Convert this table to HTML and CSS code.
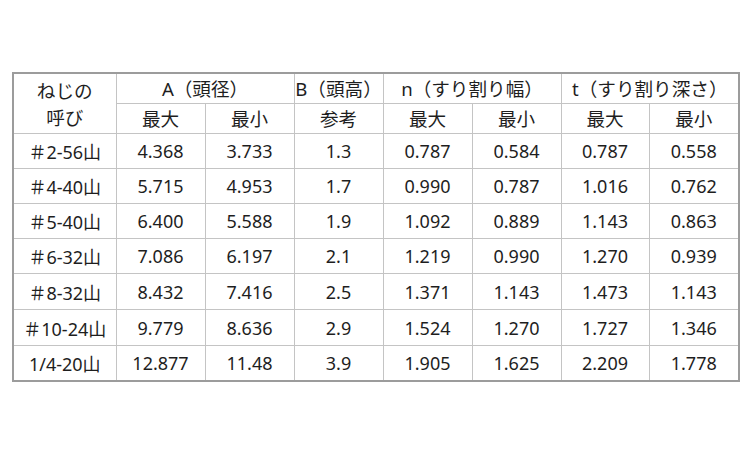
FILE: index.html
```html
<!DOCTYPE html>
<html lang="ja">
<head>
<meta charset="utf-8">
<link rel="stylesheet" href="styles.css">
</head>
<body>
<div class="wrap">
<table class="spec">
<colgroup>
<col class="c-name"><col class="c-v"><col class="c-v"><col class="c-v"><col class="c-v"><col class="c-v"><col class="c-v2"><col class="c-v3">
</colgroup>
<thead>
<tr class="h1">
<th rowspan="2" class="name">ねじの<br>呼び</th>
<th colspan="2">A（頭径）</th>
<th>B（頭高）</th>
<th colspan="2">n（すり割り幅）</th>
<th colspan="2">t（すり割り深さ）</th>
</tr>
<tr class="h2">
<th>最大</th><th>最小</th><th>参考</th><th>最大</th><th>最小</th><th>最大</th><th>最小</th>
</tr>
</thead>
<tbody>
<tr class="r35"><td>＃2-56山</td><td>4.368</td><td>3.733</td><td>1.3</td><td>0.787</td><td>0.584</td><td>0.787</td><td>0.558</td></tr>
<tr class="r35"><td>＃4-40山</td><td>5.715</td><td>4.953</td><td>1.7</td><td>0.990</td><td>0.787</td><td>1.016</td><td>0.762</td></tr>
<tr class="r35"><td>＃5-40山</td><td>6.400</td><td>5.588</td><td>1.9</td><td>1.092</td><td>0.889</td><td>1.143</td><td>0.863</td></tr>
<tr class="r35"><td>＃6-32山</td><td>7.086</td><td>6.197</td><td>2.1</td><td>1.219</td><td>0.990</td><td>1.270</td><td>0.939</td></tr>
<tr class="r36"><td>＃8-32山</td><td>8.432</td><td>7.416</td><td>2.5</td><td>1.371</td><td>1.143</td><td>1.473</td><td>1.143</td></tr>
<tr class="r36"><td>＃10-24山</td><td>9.779</td><td>8.636</td><td>2.9</td><td>1.524</td><td>1.270</td><td>1.727</td><td>1.346</td></tr>
<tr class="r35"><td>1/4-20山</td><td>12.877</td><td>11.48</td><td>3.9</td><td>1.905</td><td>1.625</td><td>2.209</td><td>1.778</td></tr>
</tbody>
</table>
</div>
</body>
</html>
```

FILE: styles.css
```css
html, body {
  margin: 0;
  padding: 0;
  background: #ffffff;
}
.wrap {
  padding: 72px 0 0 12px;
}
.spec {
  border-collapse: collapse;
  table-layout: fixed;
  width: 727px;
  border: 2px solid #9c9c9c;
  font-family: "Noto Sans", "Noto Sans CJK JP", sans-serif;
  font-size: 18px;
  color: #1e1e1e;
}
.c-name { width: 103px; }
.c-v { width: 89px; }
.c-v2 { width: 88px; }
.c-v3 { width: 90px; }
.spec th, .spec td {
  border: 1px solid #c4c4c4;
  padding: 0;
  text-align: center;
  vertical-align: middle;
  font-weight: normal;
  white-space: nowrap;
}
.spec th {
  font-size: 18.6px;
}
.spec th.name {
  line-height: 27px;
}
.h1 th, .h2 th { height: 29px; line-height: 20px; }
.r35 td { height: 34px; }
.r36 td { height: 35px; }
```
